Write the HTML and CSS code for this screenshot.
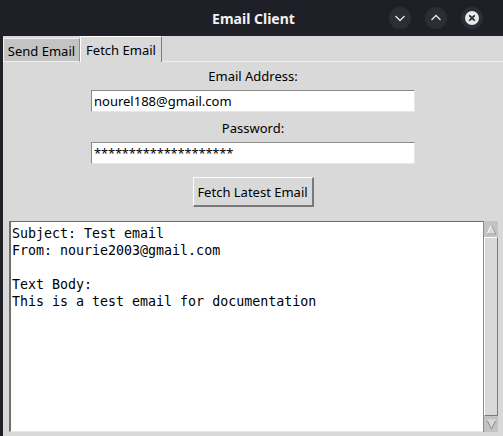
FILE: index.html
```html
<!DOCTYPE html>
<html>
<head>
<meta charset="utf-8">
<link rel="stylesheet" href="styles.css">
</head>
<body>
<div class="window">
  <div class="titlebar">
    <div class="title">Email Client</div>
    <div class="controls">
      <div class="ctl">
        <svg width="22" height="22" viewBox="0 0 22 22"><path d="M6.5 9 L11 13.5 L15.5 9" fill="none" stroke="#e6e6e6" stroke-width="1.3"/></svg>
      </div>
      <div class="ctl">
        <svg width="22" height="22" viewBox="0 0 22 22"><path d="M6.5 13 L11 8.5 L15.5 13" fill="none" stroke="#e6e6e6" stroke-width="1.3"/></svg>
      </div>
      <div class="ctl">
        <svg width="22" height="22" viewBox="0 0 22 22"><circle cx="11" cy="11" r="7" fill="#e8e8e8"/><path d="M8.3 8.3 L13.7 13.7 M13.7 8.3 L8.3 13.7" stroke="#2b2d33" stroke-width="1.8"/></svg>
      </div>
    </div>
  </div>
  <div class="content">
    <div class="tabs">
      <div class="tab">Send Email</div>
      <div class="tab active">Fetch Email</div>
      <div class="tabfill"></div>
    </div>
    <div class="panel">
      <div class="label">Email Address:</div>
      <div class="entry">nourel188@gmail.com</div>
      <div class="label pw">Password:</div>
      <div class="entry secret">********************</div>
      <div class="button">Fetch Latest Email</div>
      <div class="textrow">
        <div class="text">Subject: Test email
From: nourie2003@gmail.com

Text Body:
This is a test email for documentation</div>
        <div class="scroll">
          <div class="arrow up"><svg width="13" height="13" viewBox="0 0 13 13"><path d="M6.5 2 L11 11 L2 11 Z" fill="#d9d9d9" stroke="#fff" stroke-width="1"/><path d="M6.5 2 L11 11 L2 11" fill="none" stroke="#8a8a8a" stroke-width="1"/></svg></div>
          <div class="slider"></div>
          <div class="arrow down"><svg width="13" height="13" viewBox="0 0 13 13"><path d="M2 2 L11 2 L6.5 11 Z" fill="#d9d9d9" stroke="#8a8a8a" stroke-width="1"/><path d="M2 2 L11 2" fill="none" stroke="#fff" stroke-width="1"/></svg></div>
        </div>
      </div>
    </div>
  </div>
</div>
</body>
</html>
```
FILE: styles.css
```css
* { box-sizing: border-box; }
html, body { margin: 0; padding: 0; }
body { background: #1d1f25; width: 503px; height: 436px; overflow: hidden; }
.window {
  width: 503px; height: 436px;
  display: flex; flex-direction: column;
  background: #1f2127;
  border-radius: 10px 10px 0 0;
  overflow: hidden;
}
.titlebar {
  height: 36px; flex: none;
  position: relative;
  display: flex; align-items: center; justify-content: center;
  background: #1f2027;
}
.title {
  color: #f2f2f2;
  font-family: "Noto Sans", "DejaVu Sans", sans-serif;
  font-weight: bold;
  font-size: 14px;
  margin-left: 4px;
}
.controls {
  position: absolute; right: 20px; top: 7px;
  display: flex; gap: 14px;
}
.ctl {
  width: 22px; height: 22px; border-radius: 50%;
  background: #2c2e35;
  display: flex; align-items: center; justify-content: center;
}
.content {
  flex: 1;
  margin-left: 3px;
  background: #d9d9d9;
  display: flex; flex-direction: column;
  font-family: "Noto Sans", "DejaVu Sans", sans-serif;
  font-size: 13px;
  color: #000;
}
.tabs {
  height: 26px; flex: none;
  display: flex; align-items: flex-end;
}
.tab {
  height: 24px;
  width: 77px;
  background: #c3c3c3;
  border-left: 1px solid #f0f0f0;
  border-top: 1px solid #f0f0f0;
  border-right: 1px solid #8c8c8c;
  border-bottom: 1px solid #f0f0f0;
  display: flex; align-items: center; justify-content: center;
  padding-top: 1px;
}
.tab.active {
  height: 26px;
  width: 82px;
  background: #d9d9d9;
  border-bottom: none;
  border-left: 1px solid #fff;
  border-top: 1px solid #fff;
  border-right: 1px solid #7a7a7a;
  padding-top: 1px;
}
.tabfill {
  flex: 1; height: 1px; background: #f0f0f0;
}
.panel {
  flex: 1;
  display: flex; flex-direction: column; align-items: center;
  padding-top: 5px;
}
.label {
  height: 18px; line-height: 18px;
  margin-bottom: 5px;
}
.label.pw { margin-top: 7px; }
.entry {
  width: 324px; height: 22px;
  background: #fff;
  border-top: 1px solid #8a8a8a;
  border-left: 1px solid #8a8a8a;
  border-right: 1px solid #e6e6e6;
  border-bottom: 1px solid #e6e6e6;
  padding-left: 2px;
  line-height: 20px;
  font-size: 13px;
}
.entry.secret { letter-spacing: -0.2px; }
.button {
  margin-top: 13px;
  width: 121px; height: 30px;
  background: #d9d9d9;
  border-top: 1px solid #fff;
  border-left: 1px solid #fff;
  border-right: 2px solid #7a7a7a;
  border-bottom: 2px solid #7a7a7a;
  display: flex; align-items: center; justify-content: center;
}
.textrow {
  margin-top: 14px;
  align-self: stretch;
  margin-left: 6px;
  margin-right: 5px;
  height: 211px;
  display: flex;
}
.text {
  flex: 1;
  background: #fff;
  border-top: 1px solid #6e6e6e;
  border-left: 2px solid #6e6e6e;
  border-bottom: 1px solid #e8e8e8;
  font-family: "DejaVu Sans Mono", "Liberation Mono", monospace;
  font-size: 13.3px;
  line-height: 17px;
  white-space: pre;
  padding: 3px 0 0 1px;
  color: #000;
}
.scroll {
  width: 15px;
  background: #c3c3c3;
  border-left: 1px solid #8a8a8a;
  display: flex; flex-direction: column;
  padding: 1px 0;
}
.arrow {
  height: 14px; flex: none;
  display: flex; align-items: center; justify-content: center;
}
.slider {
  flex: 1;
  margin: 1px 0;
  background: #d9d9d9;
  border-top: 1px solid #fff;
  border-left: 1px solid #fff;
  border-right: 1px solid #7a7a7a;
  border-bottom: 1px solid #7a7a7a;
}
```
